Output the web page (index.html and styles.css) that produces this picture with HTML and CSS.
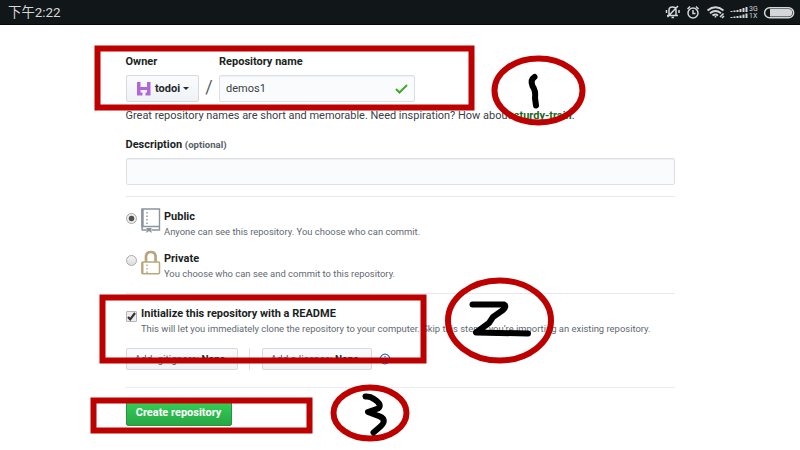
FILE: index.html
```html
<!DOCTYPE html>
<html lang="en">
<head>
<meta charset="utf-8">
<title>Create repository</title>
<link rel="stylesheet" href="styles.css">
</head>
<body>
<header class="status">
  <span class="time">下午2:22</span>
  <svg class="status-icons" width="136" height="24" viewBox="0 0 136 24" fill="none" stroke="#d4d6d7" stroke-width="1.500">
    <path d="M3 15.500H14M5 15V10Q5 7 8.500 7Q12 7 12 10V15M7.500 17.500H10M3.500 17L14 6M2.500 10V13M15 10V13"/>
    <circle cx="29" cy="13" r="5"/><path d="M29 10V13.500H31.500M23.500 9L26 6.500M32 6.500L34.500 9"/>
    <path stroke-width="1.900" d="M43.500 10.500Q51.500 4 59.500 10.500M46 13.200Q51.500 8.800 57 13.200M48.500 15.600Q51.500 13.300 54 15.600"/><path d="M51.500 17.500V16M56 17L59.500 13.500M58 18L60 16" stroke-width="1.600"/>
    <path stroke-width="2" d="M67.500 12V11M70.500 12V10.500M73.500 12V10M76.500 12V9M79.500 12V8M82.500 12V7M67.500 18V17M70.500 18V16.500M73.500 18V16M76.500 18V15.500M79.500 18V14.500M82.500 18V13.500"/>
    <rect x="100.600" y="7.700" width="29" height="10" rx="5"/><path fill="#d4d6d7" stroke="none" d="M106 9H124.500Q128.300 9 128.300 12.700Q128.300 16.400 124.500 16.400H106Z"/>
  </svg>
  <span class="network">3G<br>1X</span>
</header>
<main class="form">
  <div class="name-row">
    <div class="owner"><label>Owner</label>
      <button class="btn owner-btn"><svg width="14" height="14" viewBox="0 0 14 14"><path fill="#b166dc" d="M0 0H3.500V5H10V0H13.500V13.500H8.500V10.500H10V8H3.500V10.500H5.500V13.500H0Z"/></svg><b>todoi</b><i class="caret"></i></button>
    </div>
    <span class="slash">/</span>
    <div class="repo"><label>Repository name</label>
      <div class="field repo-field"><span>demos1</span><svg width="13" height="10" viewBox="0 0 13 10"><path d="M1 5L4.500 8.500L12 1" fill="none" stroke="#42a82b" stroke-width="2"/></svg></div>
    </div>
  </div>
  <p class="hint"><span class="hint-text">Great repository names are short and memorable. Need inspiration? How about</span> <b>sturdy-train</b>.</p>
  <label class="description">Description <small>(optional)</small></label>
  <div class="field description-field"></div>
  <section class="visibility">
    <div class="choice">
      <span class="radio checked"></span>
      <svg class="kind" width="20" height="26" viewBox="0 0 20 26" fill="none" stroke="#8b949f" stroke-width="1.400"><path d="M1 21V1H18.500V22H11M5.500 22H1.200V18.500H18.500"/><path d="M1.500 1V19" stroke-width="2.400"/><path d="M6 4V17" stroke-dasharray="1.500 2"/><path fill="#8b949f" stroke="none" d="M5.500 20H10.500V25L8 23L5.500 25Z"/></svg>
      <div><strong>Public</strong><p class="public-note">Anyone can see this repository. You choose who can commit.</p></div>
    </div>
    <div class="choice">
      <span class="radio"></span>
      <svg class="kind" width="20" height="26" viewBox="0 0 20 26" fill="none" stroke="#b6a77c"><rect x="1" y="12" width="17.500" height="11.800" rx="1" stroke-width="1.500"/><path d="M5 12V7Q5 2 9.800 2Q14.600 2 14.600 7V12" stroke-width="2.700"/><path d="M1.500 12V24" stroke-width="2"/><path d="M6 14.500V23" stroke-width="1.400" stroke-dasharray="1.500 2"/></svg>
      <div><strong>Private</strong><p class="private-note">You choose who can see and commit to this repository.</p></div>
    </div>
  </section>
  <section class="initialize">
    <div class="readme">
      <span class="checkbox"><svg width="11" height="11" viewBox="0 0 11 11"><path d="M2 6L4.200 8.300L9 2" fill="none" stroke="#333" stroke-width="2.200"/></svg></span>
      <div><strong>Initialize this repository with a README</strong><p>This will let you immediately clone the repository to your computer. Skip this step if you’re importing an existing repository.</p></div>
    </div>
    <div class="extras">
      <button class="btn ignore"><span>Add .gitignore: <b>None</b></span><i class="caret"></i></button>
      <span class="divider"></span>
      <button class="btn license"><span>Add a license: <b>None</b></span><i class="caret"></i></button>
      <svg width="12" height="12" viewBox="0 0 12 12" fill="none" stroke="#2874d0" stroke-width="1.300"><circle cx="6" cy="6" r="4.800"/><path d="M6 5V9M6 3V4.200"/></svg>
    </div>
  </section>
  <button class="create">Create repository</button>
</main>
<svg class="annotations" width="800" height="450" viewBox="0 0 800 450" fill="none">
  <g stroke="#bd0000" stroke-width="6">
    <rect x="97.500" y="48.500" width="374" height="59"/>
    <rect x="102.500" y="297.500" width="321" height="63"/>
    <rect x="93.500" y="400.500" width="216" height="30"/>
    <ellipse cx="538.500" cy="90.500" rx="44" ry="32"/>
    <ellipse cx="499.500" cy="320.500" rx="51.500" ry="40"/>
    <ellipse cx="370" cy="413" rx="36.500" ry="25.500"/>
  </g>
  <g stroke="#000" stroke-width="6" stroke-linecap="round" stroke-linejoin="round">
    <path d="M534.500 77Q530 80 532.500 86Q536 91 535 98L536 105.500"/>
    <path d="M472.500 304.500H504Q507 306 503 310L493 317L489 323L476 332.500L528 333.500"/>
    <path d="M365.500 396.500Q370 396 374 399Q383 405 378 408.500L368 412L380 416.500Q387 420 381 426L373.500 432.500"/>
  </g>
</svg>
</body>
</html>
```

FILE: styles.css
```css
* { box-sizing: border-box; }
body { margin: 0; width: 800px; height: 450px; overflow: hidden; background: #fff; color: #24292e; font-family: Roboto, "Noto Sans CJK SC", sans-serif; font-size: 11px; }
p { margin: 0; }
button { font: inherit; color: inherit; margin: 0; }
.status { height: 25px; background: #111619; color: #d4d6d7; display: flex; align-items: center; border-bottom: 1px solid #050708; position: relative; }
.time { font-size: 13.400px; padding: 2px 0 0 8px; line-height: 22px; }
.status-icons { margin-left: auto; }
.network { position: absolute; left: 749px; top: 6px; font-size: 7px; line-height: 7px; }
.form { width: 549px; margin-left: 125.500px; padding-top: 29px; }
label, strong { display: block; font-weight: 700; line-height: 15px; color: #1b1f23; white-space: nowrap; }
.name-row { display: flex; height: 48px; }
.owner { width: 73.500px; }
.name-row label { margin-bottom: 6.400px; }
.btn { display: flex; align-items: center; border: 1px solid #d6d9dd; border-radius: 2px; background: linear-gradient(#fafbfc, #eff3f6); white-space: nowrap; }
.owner-btn { width: 73.500px; height: 26.500px; padding: 0 9px 1px 10px; }
.owner-btn svg { margin-top: 1px; }
.owner-btn b { margin-left: 4px; width: 26px; }
.caret { border: 3px solid transparent; border-top-color: #24292e; border-bottom: 0; margin-left: 2px; }
.slash { width: 20px; text-align: center; padding-top: 22px; font-size: 18px; line-height: 22px; color: #586069; }
.field { border: 1px solid #dce0e5; border-radius: 2px; background: #fafbfc; box-shadow: inset 0 1px 1px #edf0f2; }
.repo-field { width: 196px; height: 26.500px; display: flex; align-items: center; justify-content: space-between; padding: 0 6px; font-size: 11px; color: #3b4045; }
.repo-field span { margin-top: -1px; }
.hint { height: 18px; margin-top: 6px; line-height: 16px; font-size: 10.970px; white-space: nowrap; color: #3b4045; }
.hint b { color: #22681b; }
.description { margin-top: 10.500px; height: 21.500px; line-height: 16px; }
.description small { color: #586069; font-size: 9.600px; }
.description-field { height: 26.500px; }
.visibility { height: 97.400px; margin-top: 11px; border-top: 1px solid #e6e8eb; padding-top: 12.200px; }
.choice { display: flex; height: 42px; }
.choice strong { line-height: 15px; }
.choice p, .readme p { color: #626971; font-size: 9.430px; line-height: 16px; white-space: nowrap; }
.radio { width: 11px; height: 11px; margin: 4.500px 4px 0 .500px; border: 1px solid #aaa; border-radius: 50%; background: linear-gradient(#f4f4f4, #ddd); }
.checked { background: radial-gradient(circle, #515151 0 2.500px, #ededed 3.200px); }
.kind { margin: -1px 3px 0 0; }
.initialize { border-top: 1px solid #e6e8eb; border-bottom: 1px solid #e9ebed; height: 95px; padding-top: 12.200px; }
.readme { display: flex; height: 42px; }
.checkbox { width: 11px; height: 11px; border: 1px solid #b5b5b5; border-radius: 1px; background: #ededed; margin: 4.500px 4px 0 .500px; }
.checkbox svg { display: block; margin: -1px; }
.extras { display: flex; align-items: center; height: 22px; font-size: 10px; color: #586069; }
.extras b { color: #24292e; }
.extras .btn { height: 22px; padding: 1px 8px 0; }
.ignore { width: 112px; }
.divider { width: 1px; height: 22px; background: #dfe2e5; margin: 0 12px 0 11px; }
.license { width: 110px; }
.extras > svg { margin-left: 7px; }
.create { display: block; width: 106px; height: 26px; margin-top: 12.600px; padding: 0 0 1px; border: 1px solid #279340; border-radius: 2px; background: linear-gradient(#34d058, #28a745); color: #fff; font-weight: 700; }
.annotations { position: absolute; left: 0; top: 0; }
```
